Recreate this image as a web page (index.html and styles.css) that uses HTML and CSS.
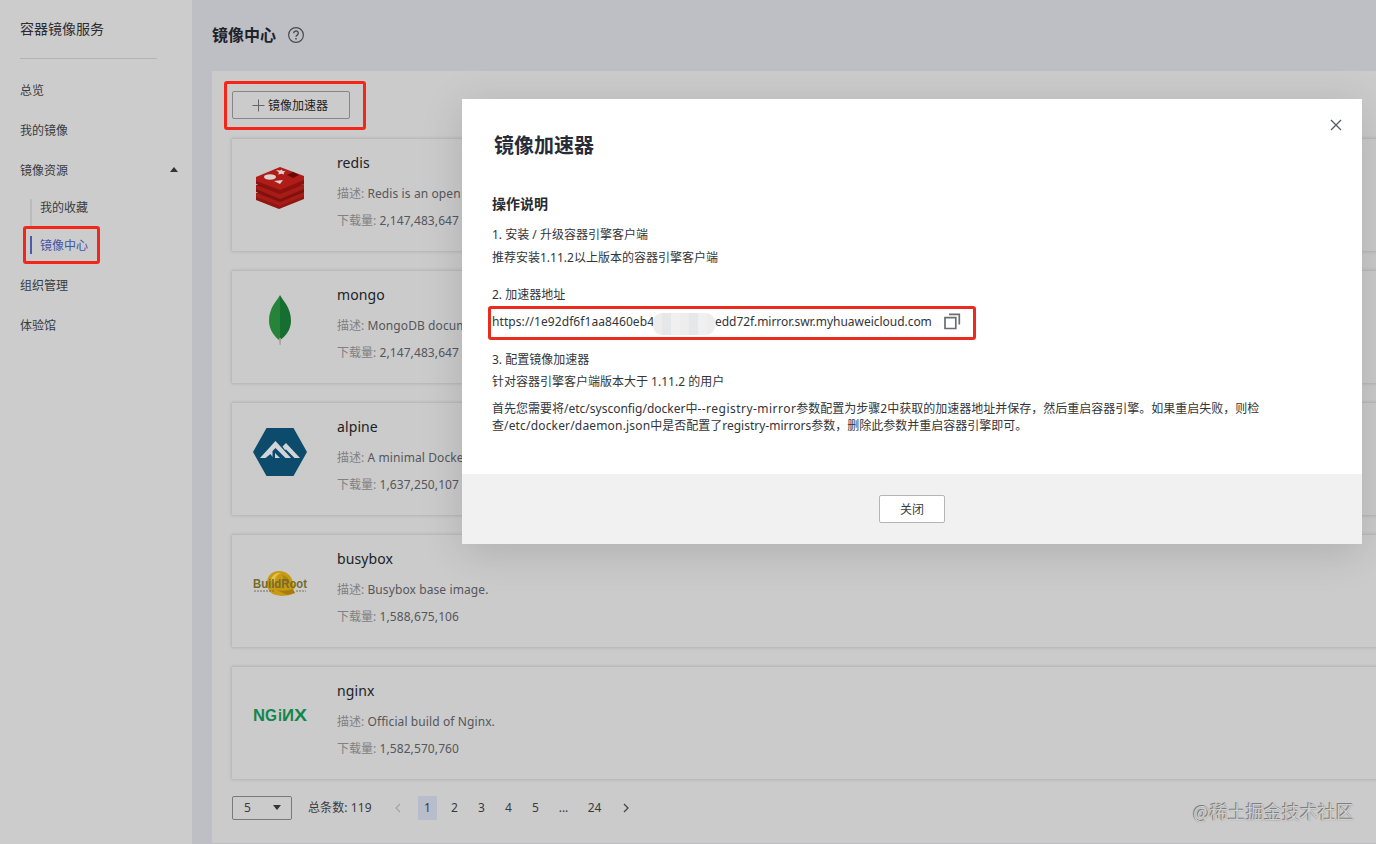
FILE: index.html
```html
<!DOCTYPE html>
<html lang="zh-CN">
<head>
<meta charset="utf-8">
<title>容器镜像服务</title>
<link rel="stylesheet" href="styles.css">
</head>
<body>
<div class="app">
  <nav class="sidebar">
    <div class="service">容器镜像服务</div>
    <ul class="menu">
      <li class="item">总览</li>
      <li class="item">我的镜像</li>
      <li class="item">镜像资源<svg class="caret" width="8" height="5" viewBox="0 0 8 5"><path d="M0 5 4 0l4 5z" fill="#333"/></svg></li>
      <li><ul class="submenu">
        <li class="sub">我的收藏</li>
        <li class="sub active">镜像中心<i class="mark mark-nav"></i></li>
      </ul></li>
      <li class="item">组织管理</li>
      <li class="item">体验馆</li>
    </ul>
  </nav>
  <main class="main">
    <header class="head">
      <h1>镜像中心</h1>
      <svg width="18" height="18" viewBox="0 0 18 18" fill="none" stroke="#4a4b4e" stroke-width="1.2"><circle cx="9" cy="9" r="7.4"/><path d="M6.7 7.2a2.3 2.2 0 1 1 3.7 1.7c-.9.6-1.4.9-1.4 1.9" stroke-width="1.4"/><path d="M9 12v1.5" stroke-width="1.5"/></svg>
    </header>
    <section class="panel">
      <button class="accel"><svg width="13" height="13" viewBox="0 0 13 13" stroke="#666" fill="none"><path d="M6.500 .5v12M.5 6.500h12"/></svg><span>镜像加速器</span><i class="mark mark-btn"></i></button>
      <div class="cards">
        <article class="card">
          <div class="logo"><svg width="50" height="42" viewBox="0 0 50 42">
            <path d="M1 26v7l23 9 25-10v-7z" fill="#8f1611"/><path d="M1 26l24 9 24-10v4L25 39 1 30z" fill="#a81c17"/>
            <path d="M1 18v7l24 10 24-10v-7z" fill="#7f110e"/><path d="M1 18l24 9 24-10v5L25 32 1 22z" fill="#a81c17"/>
            <path d="M1 10v7l24 10 24-10v-7z" fill="#8b120f"/><path d="M1 10 25 0l24 9v4L25 23 1 14z" fill="#b01c17"/>
            <ellipse cx="15" cy="10" rx="6" ry="2.700" fill="#d8d2d2"/><path d="m21 3 4 .4 2-1 .6 1.600 3 .3-2 1.500.6 1.700-3-.8-3 .7.7-1.800z" fill="#d8d2d2"/><path d="m19 14 9-1-3 4z" fill="#d8d2d2"/><path d="m32 8 6-3 6 3-6 3z" fill="#670b09"/>
          </svg></div>
          <div class="info"><h2>redis</h2><p><b>描述:</b> Redis is an open source</p><p><b>下载量:</b> 2,147,483,647</p></div>
        </article>
        <article class="card">
          <div class="logo"><svg width="24" height="50" viewBox="0 0 24 50"><path d="M12 0C9 6 1 12 1 26c0 9 6 16 10 19h1z" fill="#26833a"/><path d="M12 0c3 6 11 12 11 26 0 9-6 16-11 19z" fill="#176e31"/><path d="M11 43h2l-.4 7h-1z" fill="#a79b8c"/></svg></div>
          <div class="info"><h2>mongo</h2><p><b>描述:</b> MongoDB document</p><p><b>下载量:</b> 2,147,483,647</p></div>
        </article>
        <article class="card">
          <div class="logo"><svg width="54" height="48" viewBox="0 0 54 48"><path d="M13.500 0h27L54 24 40.500 48h-27L0 24z" fill="#0c4b6b"/><path d="M7 30 22.500 13 38 30h-5.500l-10-10-3 3v6l-2-3-5 4zM29.500 18.500 33 15l14 15h-5.500L33 21.500l-1 .5zM22 25l5 5h-5z" fill="#d2d5d8"/></svg></div>
          <div class="info"><h2>alpine</h2><p><b>描述:</b> A minimal Docker</p><p><b>下载量:</b> 1,637,250,107</p></div>
        </article>
        <article class="card">
          <div class="logo"><svg width="54" height="28" viewBox="0 0 54 28"><path d="M14 13C14 5 20 1 26 1c8 0 13 5 14 12l2 5-3 2 3 3-5 2-8 1-6-1c-6-1-9-6-9-12z" fill="#c79a12"/><path d="M18 10c1-5 6-8 10-7-5 2-7 6-6 11z" fill="#dfc34a"/><path d="M29 5c5 1 7 4 8 9l-5-2z" fill="#b1860b"/><path d="M24 20c5 1 10 1 16-1l2 4-8 2z" fill="#a67b12"/><text x="0" y="18" class="br" textLength="54" lengthAdjust="spacingAndGlyphs">BuildRoot</text><path d="M1 21h20M43 21h10" stroke="#776f55" stroke-dasharray="2 1"/></svg></div>
          <div class="info"><h2>busybox</h2><p><b>描述:</b> Busybox base image.</p><p><b>下载量:</b> 1,588,675,106</p></div>
        </article>
        <article class="card">
          <div class="logo"><svg width="54" height="14" viewBox="0 0 54 14" class="ng"><text x="0" y="12" textLength="12" lengthAdjust="spacingAndGlyphs">N</text><text x="12" y="12" textLength="12" lengthAdjust="spacingAndGlyphs">G</text><text x="25" y="12" textLength="4" lengthAdjust="spacingAndGlyphs">i</text><text x="-41" y="12" transform="scale(-1 1)" textLength="12" lengthAdjust="spacingAndGlyphs">N</text><text x="41" y="12" textLength="13" lengthAdjust="spacingAndGlyphs">X</text></svg></div>
          <div class="info"><h2>nginx</h2><p><b>描述:</b> Official build of Nginx.</p><p><b>下载量:</b> 1,582,570,760</p></div>
        </article>
      </div>
      <footer class="pager">
        <div class="size">5<svg width="8" height="5" viewBox="0 0 8 5"><path d="M0 0h8L4 5z" fill="#333"/></svg></div>
        <span class="total">总条数: 119</span>
        <span class="arrow"><svg width="6" height="10" viewBox="0 0 6 10" fill="none" stroke="#a5a6a8" stroke-width="1.200"><path d="M5 1 1 5l4 4"/></svg></span>
        <span class="page on">1</span><span class="page">2</span><span class="page">3</span><span class="page">4</span><span class="page">5</span><span class="page dots">...</span><span class="page last">24</span>
        <span class="arrow"><svg width="6" height="10" viewBox="0 0 6 10" fill="none" stroke="#444" stroke-width="1.300"><path d="m1 1 4 4-4 4"/></svg></span>
      </footer>
    </section>
  </main>
</div>
<div class="watermark">@稀土掘金技术社区</div>
<div class="modal">
  <div class="body">
    <div class="top"><h2>镜像加速器</h2><svg class="close" width="12" height="12" viewBox="0 0 12 12" stroke="#555a63" stroke-width="1.300"><path d="m1 1 10 10M11 1 1 11"/></svg></div>
    <h3>操作说明</h3>
    <p class="line l1">1. 安装 / 升级容器引擎客户端</p>
    <p class="line l2">推荐安装1.11.2以上版本的容器引擎客户端</p>
    <p class="line l3">2. 加速器地址</p>
    <div class="address"><span class="url-a">https://1e92df6f1aa8460eb4</span><span class="mask"></span><span class="url-b">edd72f.mirror.swr.myhuaweicloud.com</span><svg width="17" height="17" viewBox="0 0 17 17" fill="none" stroke="#6c6d70" stroke-width="1.700"><path d="M1 4.700h10.800v10.800H1zM5 1.300h10.300v10.200"/></svg></div>
    <p class="line l4">3. 配置镜像加速器</p>
    <p class="line l5">针对容器引擎客户端版本大于 1.11.2 的用户</p>
    <p class="long">首先您需要将/etc/sysconfig/docker中<span class="option">--registry-mirror</span>参数配置为步骤2中获取的加速器地址并保存，然后重启容器引擎。如果重启失败，则检<br>查<span class="path">/etc/docker/daemon.json</span>中是否配置了registry-mirrors参数，删除此参数并重启容器引擎即可。</p>
  </div>
  <div class="foot"><button class="shut">关闭</button></div>
</div>
</body>
</html>
```
FILE: styles.css
```css
* { box-sizing: border-box; margin: 0; padding: 0; }
body { width: 1376px; height: 844px; overflow: hidden; position: relative; font: 12px/20px "Noto Sans", "Noto Sans CJK SC", sans-serif; color: #393b40; background: #bdbfc5; }
ul { list-style: none; }
svg { display: block; flex: none; overflow: visible; }
button { font: inherit; color: inherit; }
.app { display: flex; height: 844px; }
.sidebar { width: 192px; flex: none; background: #cccccc; padding: 0 14px 0 20px; }
.service { width: 137px; height: 59px; border-bottom: 1px solid #b3b3b5; font-size: 14px; line-height: 58px; color: #2b2d31; }
.menu { padding-top: 12px; }
.item { height: 40px; line-height: 40px; display: flex; align-items: center; justify-content: space-between; white-space: nowrap; }
.item .caret { margin-top: -3px; }
.submenu { height: 75px; margin-left: 10px; }
.sub { position: relative; height: 37px; line-height: 34px; padding-left: 10px; }
.sub::before { content: ""; position: absolute; left: 0; top: 8px; width: 2px; height: 29px; background: #bbbbbc; }
.sub.active { color: #4454a5; line-height: 36px; }
.sub.active::before { top: 8px; height: 18px; background: #4a5bab; }
.mark { position: absolute; border: 3px solid #f32619; border-radius: 3px; }
.mark-nav { left: -7px; top: -2px; width: 77px; height: 38px; }
.main { flex: 1; min-width: 0; padding-left: 20px; }
.head { height: 71px; padding-bottom: 1px; display: flex; gap: 11px; align-items: center; }
h1 { font-size: 16px; line-height: 24px; font-weight: 700; color: #1f2229; }
.panel { height: 772px; background: #cbcbcb; padding: 20px 0 0 20px; overflow: hidden; }
.accel { position: relative; display: flex; align-items: center; justify-content: center; gap: 3px; width: 118px; height: 28px; padding-right: 2px; border: 1px solid #83878b; border-radius: 2px; background: none; color: #202226; }
.accel span { padding-top: 1px; }
.mark-btn { left: -9px; top: -11px; width: 142px; height: 49px; }
.cards { display: grid; gap: 20px; padding-top: 20px; }
.card { width: 1160px; height: 112px; display: flex; box-shadow: 0 0 3px 1px rgba(0,0,0,.12); border-radius: 1px; }
.logo { width: 96px; height: 98px; flex: none; display: flex; align-items: center; justify-content: center; }
.info { padding: 13px 0 0 9px; }
.info h2 { font-size: 14px; line-height: 22px; font-weight: 400; color: #202226; letter-spacing: .1px; }
.info p { height: 27px; line-height: 40px; color: #55575b; white-space: nowrap; letter-spacing: .1px; }
.info p b { font-weight: 400; color: #808184; letter-spacing: 0; }
.br { font: 700 12px "Liberation Sans", sans-serif; fill: #756b2c; }
.ng { font: 700 16px "Liberation Sans", sans-serif; fill: #13864d; }
.pager { display: flex; align-items: center; height: 56px; padding-top: 1px; }
.size { width: 60px; height: 24px; display: flex; justify-content: space-between; align-items: center; padding: 0 10px 0 11px; border: 1px solid #77797c; border-radius: 2px; }
.total { width: 80px; margin-left: 16px; white-space: nowrap; letter-spacing: .1px; }
.arrow { width: 20px; display: flex; justify-content: center; }
.page { width: 19px; height: 24px; margin-left: 8px; line-height: 24px; text-align: center; }
.page.on { background: #b9bccb; margin-left: 10px; }
.page.dots { margin-left: 9px; }
.page.last { width: 25px; margin-left: 9px; margin-right: 9px; }
.watermark { position: absolute; left: 1193px; top: 799px; font: 18px/24px "Noto Sans CJK SC", sans-serif; color: #cfcfcf; text-shadow: -1px -1px 0 #7c7e80, 0 0 1px #77797b; white-space: nowrap; }
.modal { position: absolute; left: 462px; top: 99px; width: 900px; height: 445px; background: #fff; box-shadow: 0 8px 40px rgba(0,0,0,.14); }
.body { height: 375px; padding-left: 30px; color: #333539; }
.top { display: flex; justify-content: space-between; height: 95px; padding: 20px 20px 0 2px; }
.top h2 { font-size: 20px; line-height: 54px; color: #272c38; }
h3 { font-size: 14px; line-height: 20px; color: #272a30; }
.line { height: 23px; line-height: 23px; }
.l1 { margin-top: 9px; }
.l3 { margin-top: 14px; height: 24px; }
.address { display: flex; align-items: center; width: 488px; height: 34px; margin: -1px 0 0 -4px; padding: 0 0 3px 1px; border: 3px solid #e92b20; border-radius: 3px; }
.url-a { width: 161px; overflow: hidden; letter-spacing: .08px; }
.mask { width: 62px; height: 22px; border-radius: 9px; margin-top: 5px; background: repeating-linear-gradient(90deg, #ededee 0 9px, #e6e7e9 9px 18px, #f0f0f0 18px 27px); }
.url-b { width: 217px; margin-right: 12px; white-space: nowrap; letter-spacing: -.03px; }
.l4 { margin-top: 8px; }
.l5 { line-height: 21px; }
.long { margin-top: 6px; line-height: 17px; white-space: nowrap; }
.option { letter-spacing: .47px; }
.path { letter-spacing: .17px; }
.foot { height: 70px; display: flex; align-items: center; justify-content: center; background: #f1f1f1; }
.shut { width: 66px; height: 28px; padding-top: 1px; border: 1px solid #b4b5b7; border-radius: 2px; background: #fff; }
```
